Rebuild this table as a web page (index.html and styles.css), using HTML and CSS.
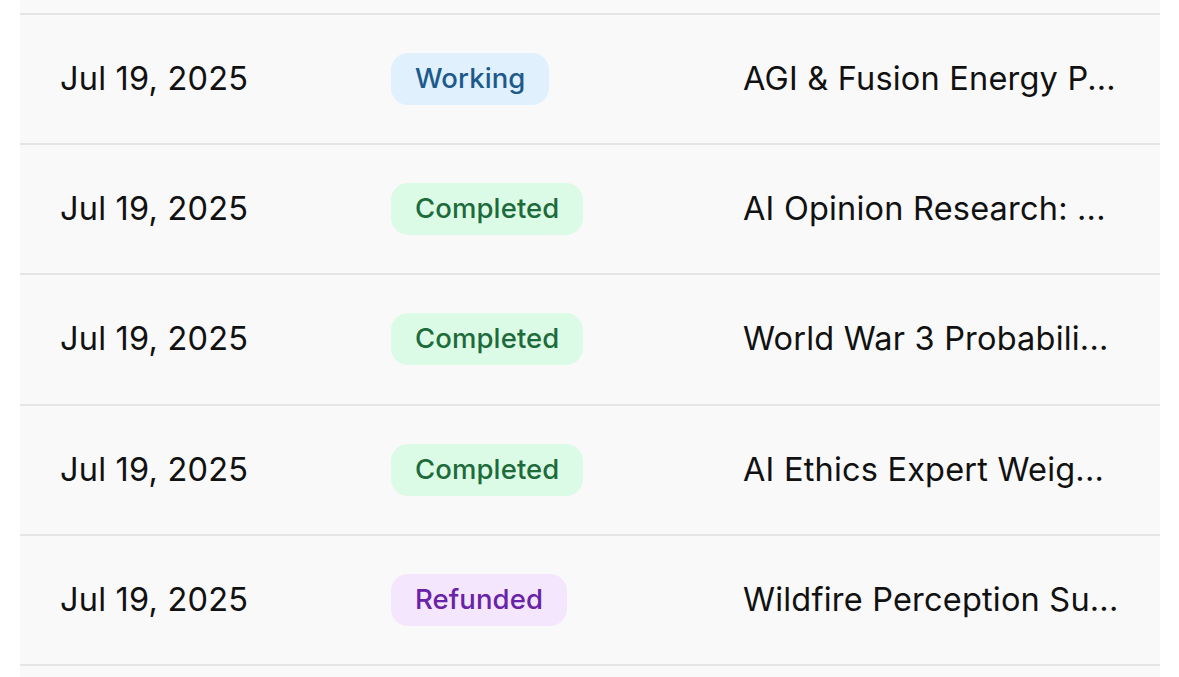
FILE: index.html
```html
<!DOCTYPE html>
<html lang="en">
<head>
<meta charset="utf-8">
<title>Jobs</title>
<link rel="stylesheet" href="styles.css">
</head>
<body>
<div class="table">
  <div class="lead"></div>
  <div class="row">
    <div class="cell date">Jul 19, 2025</div>
    <div class="cell"><span class="badge working">Working</span></div>
    <div class="cell title">AGI &amp; Fusion Energy P...</div>
  </div>
  <div class="row">
    <div class="cell date">Jul 19, 2025</div>
    <div class="cell"><span class="badge completed">Completed</span></div>
    <div class="cell title">AI Opinion Research: ...</div>
  </div>
  <div class="row">
    <div class="cell date">Jul 19, 2025</div>
    <div class="cell"><span class="badge completed">Completed</span></div>
    <div class="cell title">World War 3 Probabili...</div>
  </div>
  <div class="row">
    <div class="cell date">Jul 19, 2025</div>
    <div class="cell"><span class="badge completed">Completed</span></div>
    <div class="cell title">AI Ethics Expert Weig...</div>
  </div>
  <div class="row last">
    <div class="cell date">Jul 19, 2025</div>
    <div class="cell"><span class="badge refunded">Refunded</span></div>
    <div class="cell title">Wildfire Perception Su...</div>
  </div>
  <div class="tail"></div>
</div>
</body>
</html>
```
FILE: styles.css
```css
html, body {
  margin: 0;
  padding: 0;
  background: #ffffff;
  height: 677px;
  overflow: hidden;
}
body {
  font-family: Inter, "Noto Sans", sans-serif;
  color: #111111;
}
.table {
  margin-left: 20px;
  width: 1140px;
  background: #f9f9f9;
  display: flex;
  flex-direction: column;
}
.lead {
  height: 12.5px;
}
.row {
  box-sizing: border-box;
  height: 130.4px;
  border-top: 2px solid #e5e5e5;
  display: grid;
  grid-template-columns: 331px 352px 1fr;
  align-items: center;
  padding-left: 40px;
}
.row.last {
  border-bottom: 2px solid #e5e5e5;
  height: 132.4px;
}
.tail {
  height: 20px;
}
.cell {
  font-size: 32.5px;
  line-height: 38px;
  white-space: nowrap;
  letter-spacing: 0.2px;
}
.badge {
  display: inline-block;
  height: 52px;
  line-height: 51px;
  padding: 0 24px;
  border-radius: 17px;
  font-size: 27.5px;
  font-weight: 500;
  letter-spacing: 0.1px;
  vertical-align: middle;
}
.working {
  background: #e0f0fd;
  color: #1d5a8c;
}
.completed {
  background: #dcfbe6;
  color: #1d6b3b;
}
.refunded {
  background: #f3e6fd;
  color: #6a22a8;
}
```
